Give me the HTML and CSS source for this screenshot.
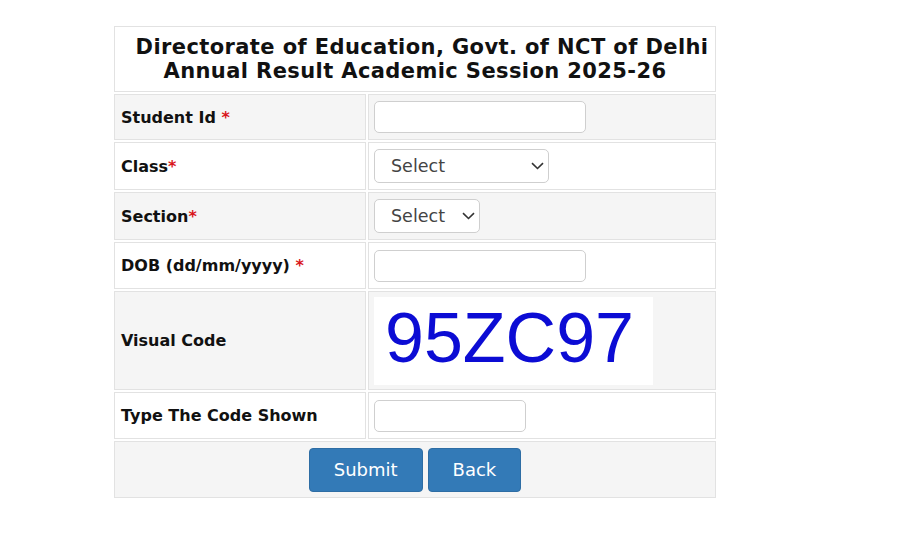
FILE: index.html
```html
<!DOCTYPE html>
<html lang="en">
<head>
<meta charset="utf-8">
<title>Annual Result</title>
<link rel="stylesheet" href="styles.css">
</head>
<body>
<div class="page">
  <table class="result-form">
    <colgroup><col class="col-label"><col class="col-value"></colgroup>
    <tr class="row-title">
      <td colspan="2" class="title">
        <div class="title-line first">Directorate of Education, Govt. of NCT of Delhi</div>
        <div class="title-line">Annual Result Academic Session 2025-26</div>
      </td>
    </tr>
    <tr class="row-shade h46">
      <td class="label">Student Id <span class="req">*</span></td>
      <td class="value"><input class="text-input wide" type="text"></td>
    </tr>
    <tr class="h48">
      <td class="label">Class<span class="req">*</span></td>
      <td class="value">
        <span class="select-wrap">
          <select class="select class-select"><option>Select</option></select>
          <svg class="chev" width="13" height="8" viewBox="0 0 13 8"><path d="M1 1.2 L6.5 6.5 L12 1.2" fill="none" stroke="#333" stroke-width="1.6"/></svg>
        </span>
      </td>
    </tr>
    <tr class="row-shade h48">
      <td class="label">Section<span class="req">*</span></td>
      <td class="value">
        <span class="select-wrap">
          <select class="select section-select"><option>Select</option></select>
          <svg class="chev" width="13" height="8" viewBox="0 0 13 8"><path d="M1 1.2 L6.5 6.5 L12 1.2" fill="none" stroke="#333" stroke-width="1.6"/></svg>
        </span>
      </td>
    </tr>
    <tr class="h47">
      <td class="label">DOB (dd/mm/yyyy) <span class="req">*</span></td>
      <td class="value"><input class="text-input wide" type="text"></td>
    </tr>
    <tr class="row-shade h99">
      <td class="label">Visual Code</td>
      <td class="value"><div class="captcha">95ZC97</div></td>
    </tr>
    <tr class="h47">
      <td class="label">Type The Code Shown</td>
      <td class="value"><input class="text-input short" type="text"></td>
    </tr>
    <tr class="row-shade h57">
      <td colspan="2" class="actions">
        <div class="btn-group">
          <button class="btn" type="button">Submit</button>
          <button class="btn" type="button">Back</button>
        </div>
      </td>
    </tr>
  </table>
</div>
</body>
</html>
```
FILE: styles.css
```css
html, body {
  margin: 0;
  padding: 0;
  background: #fff;
}
.page {
  padding: 24px 0 0 112px;
}
.result-form {
  width: 606px;
  table-layout: fixed;
  border-collapse: separate;
  border-spacing: 2px;
  font-family: "DejaVu Sans", Verdana, sans-serif;
}
.col-label { width: 252px; }
.col-value { width: 348px; }
.result-form td {
  box-sizing: border-box;
  border: 1px solid #e2e2e2;
  background: #fff;
  padding: 0;
  vertical-align: middle;
}
.result-form .row-shade td { background: #f5f5f5; }
.row-title td { height: 66px; }
.h46 td { height: 46px; }
.h47 td { height: 47px; }
.h48 td { height: 48px; }
.h57 td { height: 57px; }
.h99 td { height: 99px; }
.title {
  text-align: center;
  font-weight: bold;
  font-size: 21px;
  letter-spacing: 0.4px;
  line-height: 24px;
  color: #111;
  padding: 8px 0 10px;
}
.title-line.first { padding-left: 14px; }
.label {
  padding-left: 6px !important;
  font-weight: bold;
  font-size: 16px;
  color: #111;
}
.req { color: #d9161c; }
.value { padding-left: 5px !important; }
.text-input {
  display: block;
  box-sizing: border-box;
  height: 32px;
  border: 1px solid #cfcfcf;
  border-radius: 5px;
  background: #fff;
  margin: 0;
}
.text-input.wide { width: 212px; }
.text-input.short { width: 152px; }
.select-wrap {
  position: relative;
  display: inline-block;
  vertical-align: middle;
}
.select {
  -webkit-appearance: none;
  appearance: none;
  box-sizing: border-box;
  height: 34px;
  border: 1px solid #cfcfcf;
  border-radius: 5px;
  background: #fff;
  font-family: "DejaVu Sans", Verdana, sans-serif;
  font-size: 17.5px;
  color: #444;
  padding: 0 0 0 16px;
  margin: 0;
  display: block;
}
.class-select { width: 175px; }
.section-select { width: 106px; }
.chev {
  position: absolute;
  right: 5px;
  top: 13px;
}
.captcha {
  width: 279px;
  height: 88px;
  background: #fff;
  box-sizing: border-box;
  padding-left: 11px;
  font-family: "Liberation Sans", Arial, sans-serif;
  font-size: 70px;
  line-height: 82px;
  color: #0c0cd4;
}
.actions { text-align: center; }
.btn-group {
  display: flex;
  justify-content: center;
  gap: 5px;
}
.btn {
  height: 44px;
  padding: 0 24px;
  background: #337ab7;
  border: 1px solid #2e6da4;
  border-radius: 4px;
  color: #fff;
  font-family: "DejaVu Sans", Verdana, sans-serif;
  font-size: 18px;
  cursor: pointer;
}
```
